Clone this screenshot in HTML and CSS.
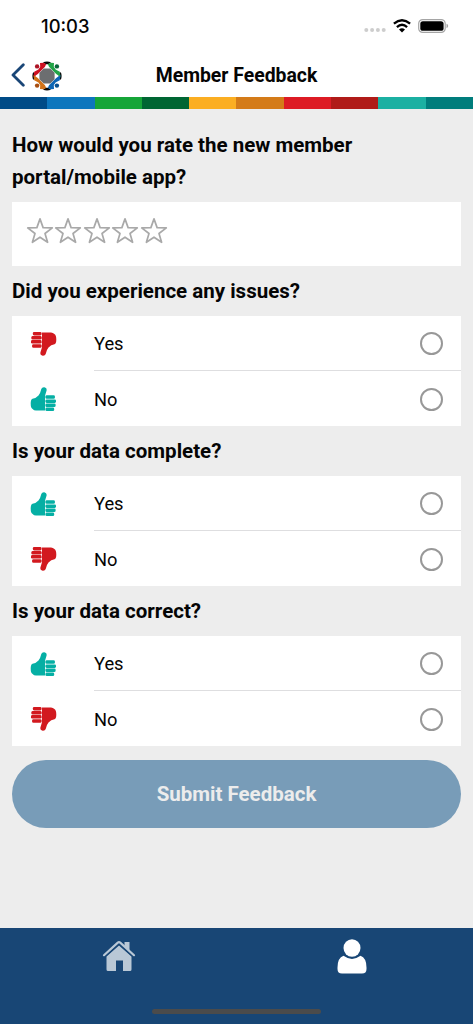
FILE: index.html
```
<!DOCTYPE html>
<html lang="en">
<head>
<meta charset="utf-8">
<meta name="viewport" content="width=device-width, initial-scale=1">
<title>Member Feedback</title>
<link rel="stylesheet" href="styles.css">
</head>
<body>
<svg class="defs" aria-hidden="true">
  <symbol id="thumb" viewBox="0 0 26 25">
    <path d="M15 23.500H6Q4 23.500 2.600 22Q0.700 21 0.700 16.500Q0.700 12.200 2.500 11.700Q6 11.300 8.500 8.500Q10.300 6.500 11.300 2Q11.900 0 14.300 0.200Q17 0.800 16.600 3.500L15 8.700Z"/>
    <rect x="15.400" y="8.300" width="9.500" height="3.500" rx="1.300"/>
    <rect x="15.400" y="12.400" width="10.600" height="3.500" rx="1.300"/>
    <rect x="15.400" y="16.500" width="10.200" height="3.500" rx="1.300"/>
    <rect x="15.400" y="20.600" width="8.800" height="3.400" rx="1.300"/>
  </symbol>
  <symbol id="star" viewBox="0 0 28 28">
    <path d="M14 1.900L17.100 10.600L26.300 10.900L19 16.500L21.600 25.300L14 20.200L6.400 25.300L9 16.500L1.700 10.900L10.900 10.600Z" fill="none" stroke="#a9a9a9" stroke-width="1.700" stroke-linejoin="round"/>
  </symbol>
  <symbol id="person" viewBox="-15 -15 30 30">
    <path d="M-13.500 1L-12.800-4.200L-8.600-6.500L-6.800-9.200L-7-13L-3.500-13.300L-0.800-12L-2-9.200L-9.200-2Z"/>
  </symbol>
</svg>
<div class="screen">
  <div class="status">
    <span class="time">10:03</span>
    <div class="indicators">
      <svg width="22" height="6" fill="#cdcdcd"><circle cx="2.300" cy="3" r="2"/><circle cx="8.100" cy="3" r="2"/><circle cx="13.900" cy="3" r="2"/><circle cx="19.700" cy="3" r="2"/></svg>
      <svg width="18" height="14" viewBox="0 0 18 14" fill="none" stroke="#000" stroke-width="2.300"><path d="M0.900 4.700Q9-2.100 17.100 4.700M3.900 8.100Q9 3.500 14.100 8.100"/><path d="M6 10.400Q9 7.900 12 10.400L9 13.500Z" fill="#000" stroke="none"/></svg>
      <svg width="31" height="14" viewBox="0 0 31 14"><rect x="0.700" y="0.600" width="26.500" height="12.800" rx="4" fill="none" stroke="#a5a5a5" stroke-width="1.200"/><rect x="2.300" y="2.200" width="23.300" height="9.600" rx="2.600"/><path d="M28.500 4.800Q30.200 5.400 30.200 7T28.500 9.200Z" fill="#a5a5a5"/></svg>
    </div>
  </div>
  <header class="header">
    <svg width="14" height="24" viewBox="0 0 14 24"><path d="M12.300 1.700L2 12L12.300 22.300" fill="none" stroke="#1a4677" stroke-width="2.800" stroke-linecap="round" stroke-linejoin="round"/></svg>
    <svg class="logo" width="30" height="30" viewBox="-15 -15 30 30">
      <path d="M-4-13.800Q0-15.400 4-13.800L1.500-11.800H-1.500ZM-4 13.800Q0 15.400 4 13.800L1.500 11.800H-1.500ZM-13.800-4Q-15.400 0-13.800 4L-11.800 1.500V-1.500ZM13.800-4Q15.400 0 13.800 4L11.800 1.500V-1.500Z" fill="#080808"/>
      <g fill="#cc1020"><use href="#person" x="-15" y="-15" width="30" height="30"/><circle cx="-9.900" cy="-9.600" r="2.200" fill="#ad1525"/></g>
      <g fill="#22a447" transform="scale(-1 1)"><use href="#person" x="-15" y="-15" width="30" height="30"/><circle cx="-9.900" cy="-9.600" r="2.200" fill="#08653a"/></g>
      <g fill="#d17218" transform="scale(1 -1)"><use href="#person" x="-15" y="-15" width="30" height="30"/><circle cx="-9.900" cy="-9.600" r="2.200" fill="#a84e10"/></g>
      <g fill="#0d66b5" transform="scale(-1 -1)"><use href="#person" x="-15" y="-15" width="30" height="30"/><circle cx="-9.900" cy="-9.600" r="2.200" fill="#08508f"/></g>
      <path d="M-3.200-7.600H3.200L7.600-3.200V3.200L3.200 7.600H-3.200L-7.600 3.200V-3.200Z" fill="#6c6e70"/>
    </svg>
    <h1 class="title">Member Feedback</h1>
  </header>
  <div class="stripes"><i class="navy"></i><i class="blue"></i><i class="green"></i><i class="forest"></i><i class="yellow"></i><i class="orange"></i><i class="red"></i><i class="crimson"></i><i class="aqua"></i><i class="teal"></i></div>
  <main class="content">
    <h2 class="question first">How would you rate the new member portal/mobile app?</h2>
    <div class="card stars">
      <svg><use href="#star"/></svg><svg><use href="#star"/></svg><svg><use href="#star"/></svg><svg><use href="#star"/></svg><svg><use href="#star"/></svg>
    </div>
    <h2 class="question">Did you experience any issues?</h2>
    <div class="card">
      <label class="row"><svg class="thumb down"><use href="#thumb"/></svg><span class="answer">Yes<i class="radio"></i></span></label>
      <label class="row"><svg class="thumb up"><use href="#thumb"/></svg><span class="answer">No<i class="radio"></i></span></label>
    </div>
    <h2 class="question">Is your data complete?</h2>
    <div class="card">
      <label class="row"><svg class="thumb up"><use href="#thumb"/></svg><span class="answer">Yes<i class="radio"></i></span></label>
      <label class="row"><svg class="thumb down"><use href="#thumb"/></svg><span class="answer">No<i class="radio"></i></span></label>
    </div>
    <h2 class="question">Is your data correct?</h2>
    <div class="card">
      <label class="row"><svg class="thumb up"><use href="#thumb"/></svg><span class="answer">Yes<i class="radio"></i></span></label>
      <label class="row"><svg class="thumb down"><use href="#thumb"/></svg><span class="answer">No<i class="radio"></i></span></label>
    </div>
    <button class="submit">Submit Feedback</button>
  </main>
  <nav class="tabs">
    <div class="tab home"><svg width="34" height="34" viewBox="0 0 34 34" fill="#b9c8d6"><path d="M4.500 17.500L17 6.400L29.500 17.500V30.500Q29.500 32 28 32H21V21.500H14V32H6Q4.500 32 4.500 30.500Z"/><path d="M2 17L17 3.500L32 17" fill="none" stroke="#184675" stroke-width="3.600"/><path d="M2 16.200L15.800 3.600Q17 2.600 18.200 3.600L32 16.200" fill="none" stroke="#b9c8d6" stroke-width="2.200" stroke-linecap="round"/><path d="M22.500 3H27.500V12L22.500 7.500Z"/></svg></div>
    <div class="tab profile"><svg width="34" height="38" viewBox="0 0 34 38" fill="#fff"><ellipse cx="17" cy="10" rx="8.500" ry="8.800"/><path d="M8.500 17.800Q17 24 25.500 17.800Q31.500 20 31.500 29.500V31Q31.500 35.500 27 35.500H7Q2.500 35.500 2.500 31V29.500Q2.500 20 8.500 17.800Z"/></svg></div>
    <div class="home-indicator"></div>
  </nav>
</div>
</body>
</html>
```
FILE: styles.css
```
* { box-sizing: border-box; }
body { margin: 0; font-family: Roboto, "Liberation Sans", sans-serif; color: #050505; background: #ededed; }
svg { display: block; flex: none; }
.defs { position: absolute; width: 0; height: 0; }
.screen { display: flex; flex-direction: column; width: 473px; height: 1024px; overflow: hidden; }
.status { height: 53px; flex: none; display: flex; align-items: center; justify-content: space-between; padding: 0 24px 2px 41px; background: #fff; }
.time { font: 500 18.400px Inter, sans-serif; }
.indicators { display: flex; align-items: center; gap: 7px; }
.indicators > :first-child { margin-top: 9px; }
.header { height: 44px; flex: none; display: grid; grid-template-columns: 14px 30px 1fr 62px; align-items: center; column-gap: 7px; padding-left: 11px; background: #fff; }
.logo { margin-top: 1px; }
.title { margin: 1px 0 0; text-align: center; font-size: 19.400px; line-height: 24px; font-weight: 700; }
.stripes { display: grid; grid-template-columns: repeat(10, 1fr); height: 12px; flex: none; }
.navy { background: #004b87; }
.blue { background: #0d76bd; }
.green { background: #16a538; }
.forest { background: #006633; }
.yellow { background: #fbae22; }
.orange { background: #d47b18; }
.red { background: #dd1b24; }
.crimson { background: #b01b18; }
.aqua { background: #1bb0a2; }
.teal { background: #007d7c; }
.content { flex: 1; padding: 0 12px; }
.question { margin: 0; height: 50px; font-size: 20.530px; line-height: 32px; font-weight: 700; padding-top: 9px; }
.question.first { height: 93.400px; padding-top: 20px; }
.card { background: #fff; height: 110px; }
.stars { height: 64px; display: flex; padding: 15px 13.500px; gap: 0.500px; }
.stars svg { width: 28px; height: 28px; }
.row { height: 55px; display: flex; }
.thumb { width: 26px; height: 25px; margin: 15px 38px 0 18px; }
.up { fill: #05afa4; margin-top: 16px; }
.down { fill: #d2191f; transform: translateX(1px) rotate(180deg); }
.answer { flex: 1; display: flex; align-items: center; justify-content: space-between; padding-top: 0.500px; padding-right: 18px; font-size: 18.300px; }
.row:first-child .answer { border-bottom: 1.500px solid #dedee0; }
.radio { width: 23px; height: 23px; border: 2px solid #989898; border-radius: 50%; }
.submit { display: block; width: 100%; height: 68px; margin: 14px 0 0; padding: 0; border: 0; border-radius: 34px; background: #789cb8; color: #ececec; font: 700 20.500px Roboto, sans-serif; }
.tabs { position: relative; height: 96px; flex: none; display: grid; grid-template-columns: 1fr 1fr; background: #184675; }
.tab { display: flex; justify-content: center; align-items: flex-start; padding-top: 10px; }
.home { padding-left: 1px; padding-top: 11px; }
.profile { padding-right: 5px; }
.home-indicator { position: absolute; left: 152px; bottom: 10px; width: 169px; height: 5px; border-radius: 3px; background: #4b4b4b; }
```
